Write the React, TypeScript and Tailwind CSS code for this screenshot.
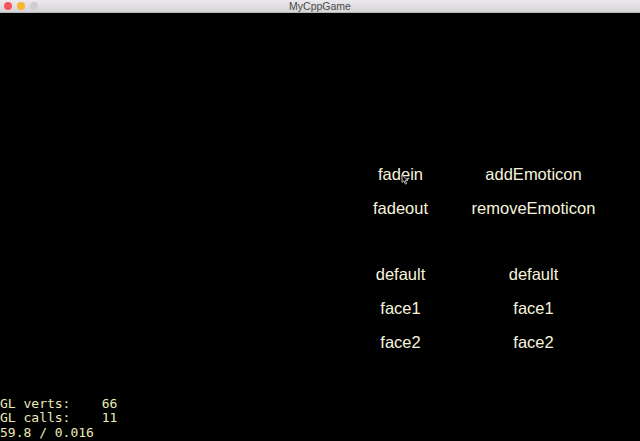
import React from "react";

const leftCol = ["fadein", "fadeout"];
const rightCol = ["addEmoticon", "removeEmoticon"];
const faces = ["default", "face1", "face2"];

export default function App() {
  return (
    <div className="w-[640px] h-[441px] flex flex-col bg-black overflow-hidden">
      {/* title bar */}
      <div className="relative h-[13px] flex items-center justify-center bg-gradient-to-b from-[#ebe9eb] to-[#d6d4d6] border-b border-[#b8b8b8]">
        <div className="absolute left-[4px] top-[2px] flex gap-[5px]">
          <span className="w-[8px] h-[8px] rounded-full bg-[#f4575a]" />
          <span className="w-[8px] h-[8px] rounded-full bg-[#f8b630]" />
          <span className="w-[8px] h-[8px] rounded-full bg-[#cfcdcf]" />
        </div>
        <span className="text-[10.5px] leading-none text-[#4a4a4a] font-['Liberation_Sans',sans-serif]">
          MyCppGame
        </span>
      </div>

      {/* game area */}
      <div className="relative flex-1 flex flex-col font-['Liberation_Sans',Arial,sans-serif] text-[16.5px] text-[#f6f4de]">
        <div className="mt-[144px] ml-[334px] grid grid-cols-[133px_133px]">
          {leftCol.map((l, i) => (
            <React.Fragment key={l}>
              <div className="h-[34px] flex items-center justify-center">{l}</div>
              <div className="h-[34px] flex items-center justify-center">{rightCol[i]}</div>
            </React.Fragment>
          ))}
        </div>
        <div className="mt-[32px] ml-[334px] grid grid-cols-[133px_133px]">
          {faces.map((f) => (
            <React.Fragment key={f}>
              <div className="h-[34px] flex items-center justify-center">{f}</div>
              <div className="h-[34px] flex items-center justify-center">{f}</div>
            </React.Fragment>
          ))}
        </div>

        <div className="mt-auto pb-[1px] font-['DejaVu_Sans_Mono',monospace] text-[13px] leading-[14.5px] text-[#ecebb6] whitespace-pre">
          <div>GL verts:    66</div>
          <div>GL calls:    11</div>
          <div>59.8 / 0.016</div>
        </div>

        {/* mouse cursor */}
        <svg className="absolute left-[401px] top-[161px]" width="8" height="11" viewBox="0 0 9 13">
          <path d="M1 1 L1 10 L3.2 8 L5 12 L6.5 11.3 L4.8 7.5 L7.8 7.5 Z" fill="#000" stroke="#ddd" strokeWidth="1" />
        </svg>
      </div>
    </div>
  );
}
